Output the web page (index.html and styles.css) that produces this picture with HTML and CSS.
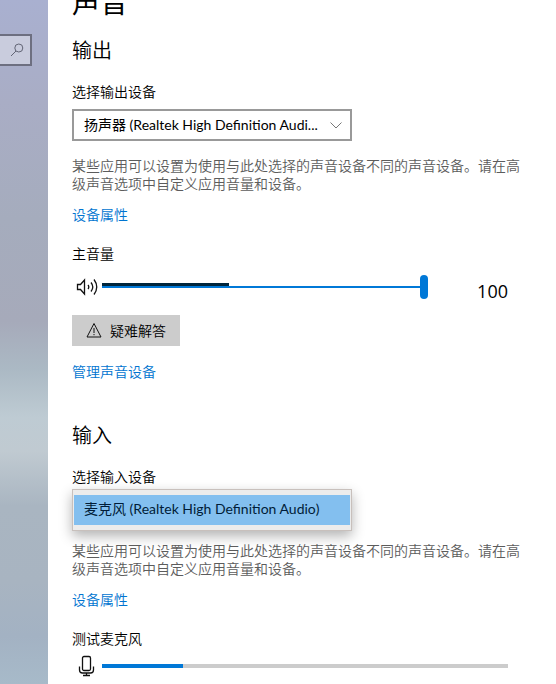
FILE: index.html
```html
<!DOCTYPE html>
<html lang="zh-CN">
<head>
    <meta charset="UTF-8">
    <meta name="viewport" content="width=device-width, initial-scale=1.0">
    <link rel="stylesheet" href="styles.css">
    <title>声音</title>
</head>
<body>

    <aside class="sidebar">
        <form class="search">
            <input type="search" class="search-input" aria-label="查找设置">
            <svg class="search-icon" viewBox="0 0 14 14">
                <circle cx="8.8" cy="5" r="4"/>
                <path d="M6 8 1 13"/>
            </svg>
        </form>
    </aside>

    <main class="content">
        <h1 class="title">声音</h1>

        <section class="output">
            <h2>输出</h2>
            <label class="label" for="outputDevice">选择输出设备</label>
            <div class="select-wrap">
                <select id="outputDevice" class="select">
                    <option>扬声器 (Realtek High Definition Audi...</option>
                </select>
                <svg class="chevron" viewBox="0 0 12 7">
                    <path d="M.5 .5 6 6 11.5 .5"/>
                </svg>
            </div>
            <p class="desc">某些应用可以设置为使用与此处选择的声音设备不同的声音设备。请在高级声音选项中自定义应用音量和设备。</p>
            <a class="link" href="#">设备属性</a>

            <label class="label spaced" for="volume">主音量</label>
            <div class="volume-row">
                <svg class="icon" viewBox="0 0 24 24">
                    <path d="M2.500 9.500h3L9.500 5v14l-4-4.500h-3z"/>
                    <path d="M13 10q1.600 2 0 4M16 7.500q3.600 4.500 0 9M19 4.500q5.500 7.500 0 15"/>
                </svg>
                <div class="slider-wrap">
                    <input type="range" id="volume" class="slider" min="0" max="100" value="100">
                    <span class="peak" style="width: 39%"></span>
                </div>
                <output class="value" for="volume">100</output>
            </div>

            <button type="button" class="troubleshoot">
                <svg class="warn" viewBox="0 0 16 16">
                    <path d="M8 1.500 15 15H1zM8 6v5M8 12v1.200"/>
                </svg>
                疑难解答
            </button>
            <a class="link manage" href="#">管理声音设备</a>
        </section>

        <section class="input">
            <h2>输入</h2>
            <label class="label" for="inputDevice">选择输入设备</label>
            <select id="inputDevice" class="listbox" size="2">
                <option selected>麦克风 (Realtek High Definition Audio)</option>
            </select>
            <p class="desc">某些应用可以设置为使用与此处选择的声音设备不同的声音设备。请在高级声音选项中自定义应用音量和设备。</p>
            <a class="link" href="#">设备属性</a>

            <label class="label spaced" for="micLevel">测试麦克风</label>
            <div class="mic-row">
                <svg class="icon" viewBox="0 0 24 24">
                    <rect x="7.500" y="2.500" width="8" height="14" rx="1.500"/>
                    <path d="M4.500 12.500v3.500q0 3 3 3h8q3 0 3-3v-3.500M11.500 19v2.500M8 21.500h7"/>
                </svg>
                <progress id="micLevel" class="level" max="100" value="20"></progress>
            </div>
        </section>
    </main>

</body>
</html>
```
FILE: styles.css
```css
* {
    box-sizing: border-box;
}

body {
    margin: 0;
    height: 100vh;
    display: flex;
    overflow: hidden;
    background: #fff;
    color: #000;
    font: 350 14px/20px "Noto Sans CJK SC", sans-serif;
}

/* left pane */
.sidebar {
    flex: 0 0 48px;
    padding-top: 34px;
    background: linear-gradient(#a9b0d0 0%, #a9adc5 15%, #a5acbd 32%, #a6aaba 47%, #abb9c4 54%, #becbd3 61%, #c0cad1 66%, #a9b5c1 74%, #a8b4c1 85%, #a3b2c3 93%, #a7bac9 100%);
}

.search {
    display: flex;
    align-items: center;
    width: 32px;
    height: 32px;
    border: 2px solid #6d6f80;
    border-left: 0;
    background: #c9ccdd;
}

.search-input {
    width: 10px;
    height: 28px;
    padding: 0;
    border: 0;
    background: none;
    outline: none;
}

.search-icon {
    width: 14px;
    height: 14px;
    fill: none;
    stroke: #626575;
}

/* right pane */
.content {
    flex: 1;
    min-width: 0;
    padding: 0 36px 0 24px;
}

.title {
    margin: -17px 0 17px;
    font-size: 28px;
    line-height: 36px;
    font-weight: 400;
}

h2 {
    margin: 0 0 17px;
    font-size: 20px;
    line-height: 28px;
    font-weight: 350;
}

.input h2 {
    margin-top: 40px;
}

.label,
.link {
    display: block;
}

.spaced {
    margin-top: 19px;
}

.link {
    width: fit-content;
    color: #0074d0;
    text-decoration: none;
}

.desc {
    margin: 15px 0 12px;
    line-height: 18px;
    color: #5c5c5c;
}

.input .desc {
    margin-top: 10px;
}

.select-wrap {
    display: grid;
    align-items: center;
    width: 280px;
    margin-top: 8px;
}

.select,
.listbox {
    font: 400 14px/20px Lato, "Noto Sans CJK SC", sans-serif;
}

.select {
    grid-area: 1 / 1;
    width: 100%;
    height: 32px;
    padding: 0 20px 0 10px;
    border: 2px solid #999;
    border-radius: 0;
    appearance: none;
    background: #fff;
    color: #000;
}

.chevron {
    grid-area: 1 / 1;
    justify-self: end;
    width: 12px;
    height: 7px;
    margin-right: 10px;
    fill: none;
    stroke: #777;
    pointer-events: none;
}

.volume-row,
.mic-row {
    display: flex;
    gap: 3px;
    padding-right: 12px;
}

.volume-row {
    height: 32px;
    margin-top: 12px;
}

.mic-row {
    align-items: center;
    margin-top: 6px;
}

.icon {
    flex: none;
    width: 24px;
    height: 24px;
    margin-left: 3px;
    fill: none;
    stroke: #111;
    stroke-width: 1.3;
}

.slider-wrap {
    position: relative;
    flex: 1;
    height: 24px;
}

.slider {
    display: block;
    width: 100%;
    height: 24px;
    margin: 0;
    appearance: none;
    background: linear-gradient(#0078d7, #0078d7) center / 100% 2px no-repeat;
}

.slider::-webkit-slider-thumb {
    appearance: none;
    width: 8px;
    height: 24px;
    border-radius: 4px;
    background: #0078d7;
}

/* live output level over the track */
.peak {
    position: absolute;
    left: 0;
    top: 8px;
    height: 3px;
    background: #00263c;
}

.value {
    width: 77px;
    font: 18px/32px "Open Sans", sans-serif;
    text-align: right;
}

.troubleshoot {
    display: flex;
    align-items: center;
    gap: 8px;
    height: 31px;
    margin-top: 8px;
    padding: 0 14px 2px;
    border: 0;
    background: #ccc;
    color: #000;
    font: inherit;
}

.warn {
    width: 16px;
    height: 16px;
    fill: none;
    stroke: #111;
}

.manage {
    margin-top: 15px;
}

.listbox {
    display: block;
    width: 280px;
    height: 42px;
    margin-top: 3px;
    padding: 5px 1px;
    border: 1px solid #c8c0bc;
    border-radius: 0;
    outline: none;
    overflow: hidden;
    background: #ececec;
    box-shadow: 0 5px 12px rgba(0, 0, 0, 0.3);
}

.listbox option {
    padding: 3px 10px 7px;
    min-height: 30px;
    line-height: 20px;
}

.listbox option:checked {
    background: #83bfef linear-gradient(#83bfef, #83bfef);
    color: #001c38;
}

.level {
    flex: 1;
    height: 4px;
    border: 0;
    appearance: none;
}

.level::-webkit-progress-bar {
    background: #ccc;
}

.level::-webkit-progress-value {
    background: #0078d7;
}
```
